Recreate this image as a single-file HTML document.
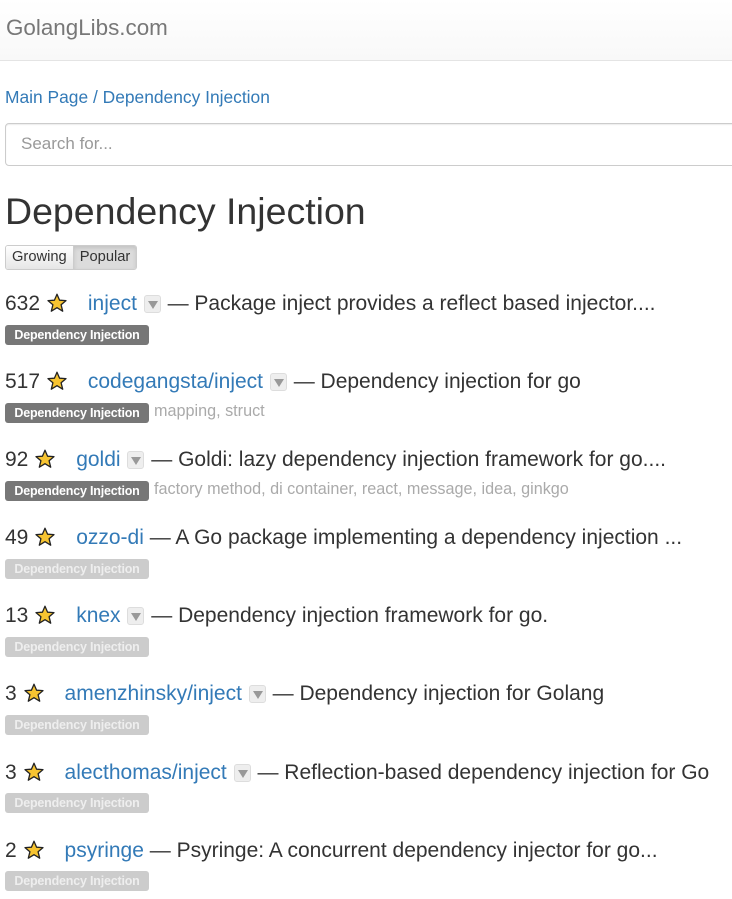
<!DOCTYPE html>
<html><head><meta charset="utf-8"><style>
*{box-sizing:border-box}
body{margin:0;width:732px;height:899px;overflow:hidden;background:#fff;font-family:"Liberation Sans",sans-serif;color:#333;position:relative}
.nav{position:absolute;left:0;top:0;width:732px;height:61px;background:linear-gradient(#fff,#f8f8f8);border-bottom:1px solid #e4e4e4}
.brand{position:absolute;left:6px;top:15px;font-size:22.4px;color:#777}
.bc{position:absolute;left:5px;top:87px;font-size:17.4px;color:#337ab7}
.search{position:absolute;left:5px;top:123px;width:740px;height:43px;border:1px solid #ccc;border-radius:4px;box-shadow:inset 0 1px 1px rgba(0,0,0,.075)}
.search span{position:absolute;left:15px;top:10px;font-size:17px;color:#999}
h1{position:absolute;left:5px;top:190px;margin:0;font-size:37.5px;font-weight:normal;line-height:42px;color:#333}
.btns{position:absolute;left:5px;top:245px;height:25px;display:flex;border:1px solid #ccc;border-radius:3px;overflow:hidden;font-size:14.7px}
.btns div{padding:3px 6px 0;height:23px}
.b1{background:linear-gradient(#fff,#e6e6e6);border-right:1px solid #ccc}
.b2{background:#dcdcdc;box-shadow:inset 0 2px 4px rgba(0,0,0,.12)}
.row{position:absolute;left:5px;font-size:21px;line-height:24px;white-space:nowrap}
.row svg{vertical-align:-3px;margin-left:1px}
.row a{color:#337ab7;text-decoration:none;margin-left:21px}
.dd{display:inline-block;width:17px;height:18px;border:1px solid #ddd;border-radius:3px;background:#eee;vertical-align:-3px;position:relative;margin:0 1px 0 1px}
.dd:after{content:"";position:absolute;left:3px;top:5px;border-left:5px solid transparent;border-right:5px solid transparent;border-top:8px solid #999}
.bd{position:absolute;left:5px;height:20px;width:144px;border-radius:3px;background:#777;color:#fff;font-size:12.5px;font-weight:bold;line-height:20px;text-align:center;white-space:nowrap;letter-spacing:-0.2px}
.bd.f{background:#ccc;color:#eee}
.tg{position:absolute;left:154px;font-size:16.2px;color:#aaa;line-height:20px}
</style></head><body>
<div class="nav"><div class="brand">GolangLibs.com</div></div>
<div class="bc">Main Page / Dependency Injection</div>
<div class="search"><span>Search for...</span></div>
<h1>Dependency Injection</h1>
<div class="btns"><div class="b1">Growing</div><div class="b2">Popular</div></div>

<svg width="0" height="0" style="position:absolute"><defs><symbol id="st" viewBox="0 0 20 20"><path d="M10 1.2 12.6 7.2 19 7.6 14.1 11.8 15.7 18.2 10 14.7 4.3 18.2 5.9 11.8 1 7.6 7.4 7.2Z" fill="#f7c431" stroke="#222" stroke-width="1.3" stroke-linejoin="round"/></symbol></defs></svg>

<div class="row" style="top:292px">632 <svg width="20" height="20"><use href="#st"/></svg><a>inject</a> <span class="dd"></span> — Package inject provides a reflect based injector....</div>
<div class="bd" style="top:325px">Dependency Injection</div>

<div class="row" style="top:370px">517 <svg width="20" height="20"><use href="#st"/></svg><a>codegangsta/inject</a> <span class="dd"></span> — Dependency injection for go</div>
<div class="bd" style="top:403px">Dependency Injection</div><div class="tg" style="top:401px">mapping, struct</div>

<div class="row" style="top:448px">92 <svg width="20" height="20"><use href="#st"/></svg><a>goldi</a> <span class="dd"></span> — Goldi: lazy dependency injection framework for go....</div>
<div class="bd" style="top:481px">Dependency Injection</div><div class="tg" style="top:479px">factory method, di container, react, message, idea, ginkgo</div>

<div class="row" style="top:526px">49 <svg width="20" height="20"><use href="#st"/></svg><a>ozzo-di</a> — A Go package implementing a dependency injection ...</div>
<div class="bd f" style="top:559px">Dependency Injection</div>

<div class="row" style="top:604px">13 <svg width="20" height="20"><use href="#st"/></svg><a>knex</a> <span class="dd"></span> — Dependency injection framework for go.</div>
<div class="bd f" style="top:637px">Dependency Injection</div>

<div class="row" style="top:682px">3 <svg width="20" height="20"><use href="#st"/></svg><a>amenzhinsky/inject</a> <span class="dd"></span> — Dependency injection for Golang</div>
<div class="bd f" style="top:715px">Dependency Injection</div>

<div class="row" style="top:761px">3 <svg width="20" height="20"><use href="#st"/></svg><a>alecthomas/inject</a> <span class="dd"></span> — Reflection-based dependency injection for Go</div>
<div class="bd f" style="top:793px">Dependency Injection</div>

<div class="row" style="top:839px">2 <svg width="20" height="20"><use href="#st"/></svg><a>psyringe</a> — Psyringe: A concurrent dependency injector for go...</div>
<div class="bd f" style="top:871px">Dependency Injection</div>
</body></html>
